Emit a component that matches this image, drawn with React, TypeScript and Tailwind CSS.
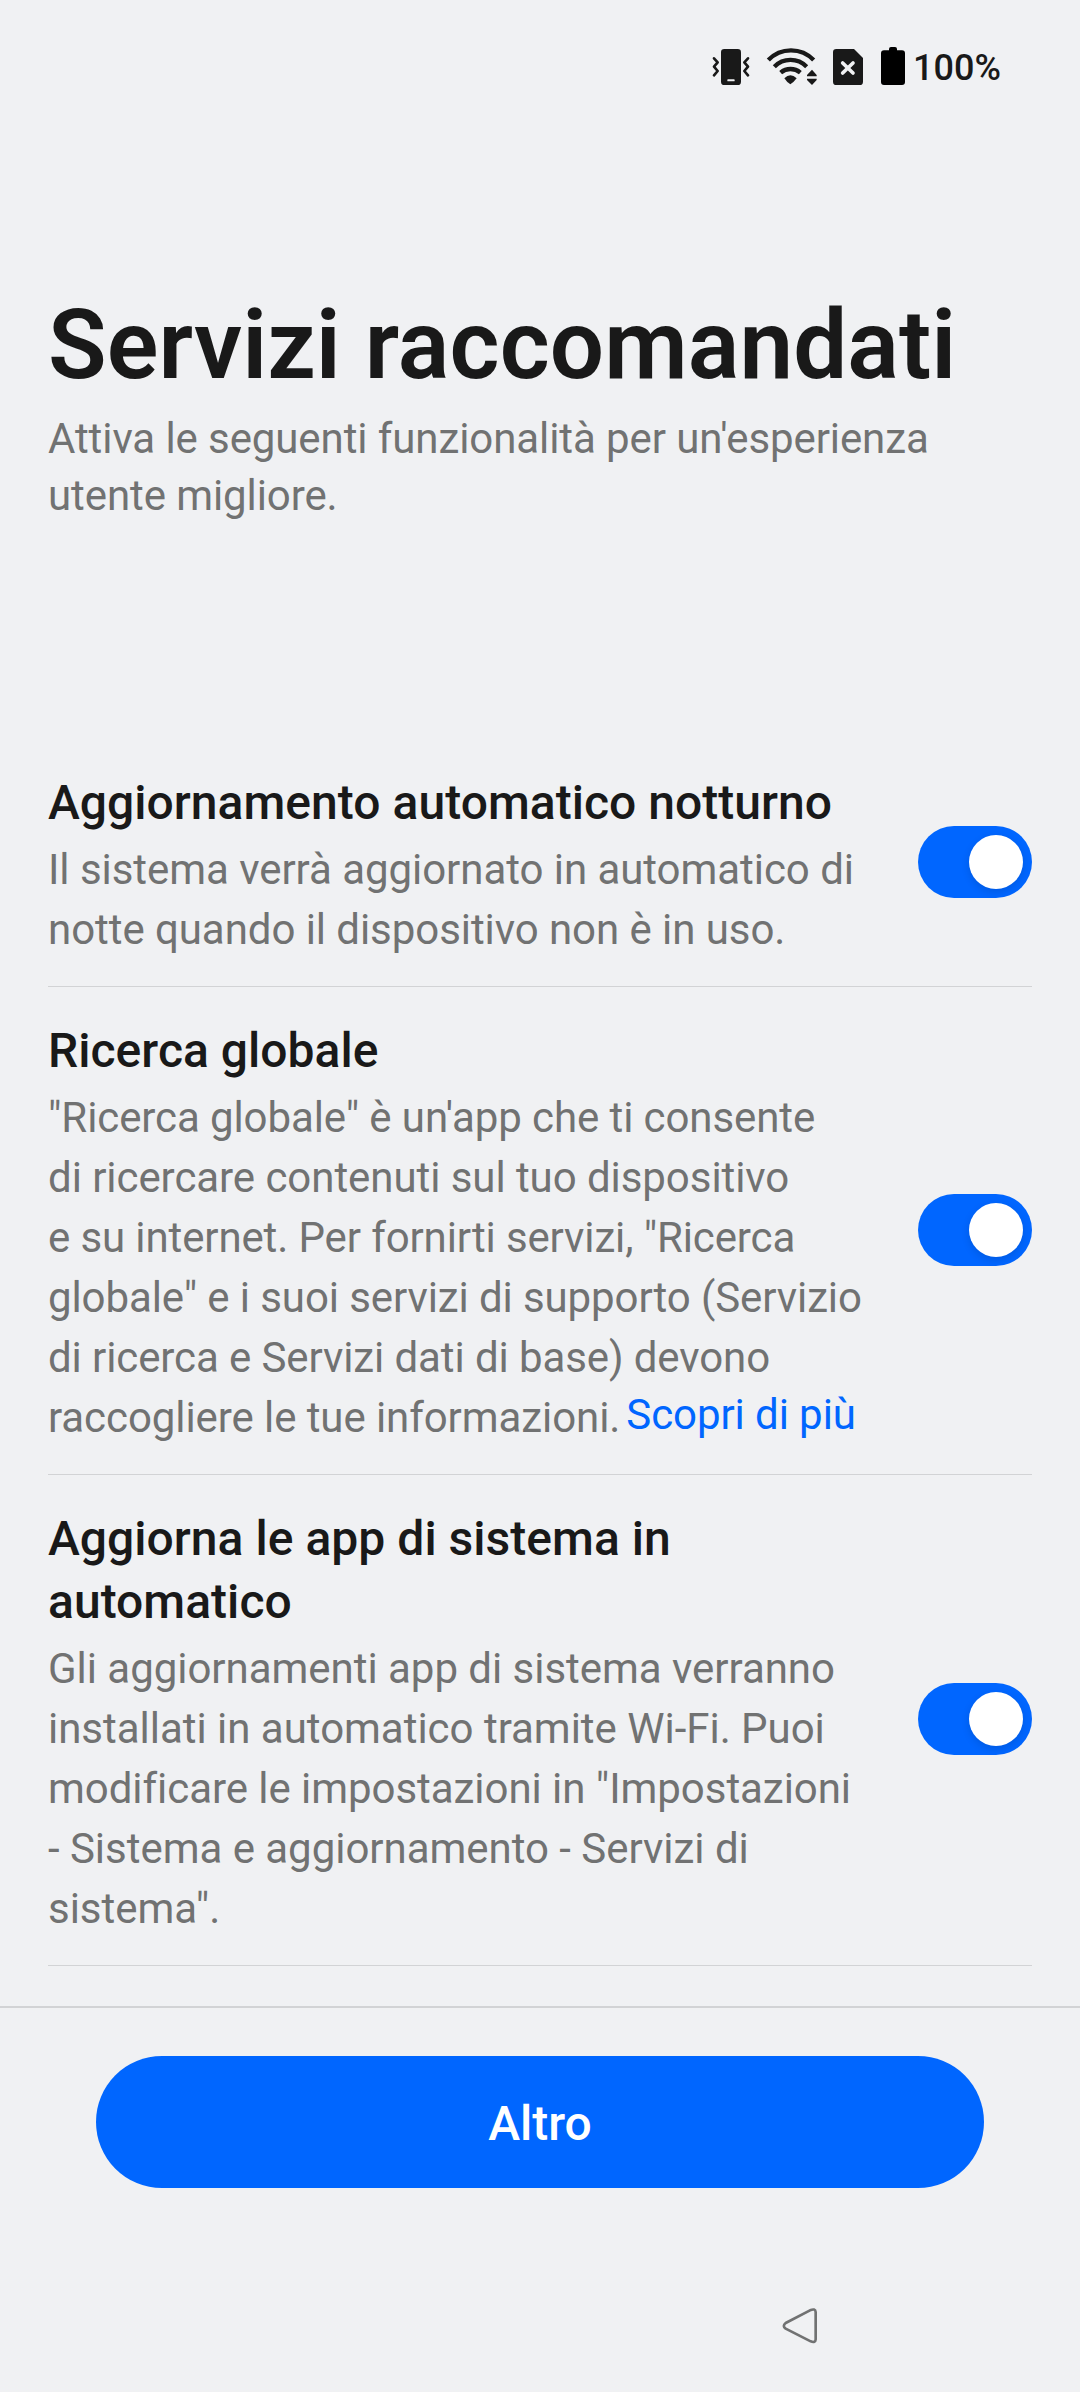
import React from "react";

type Line = { text: string; tracking: string };
type RowProps = { title: string[]; lines: Line[]; link?: string };

function VibrateIcon() {
  return (
    <svg width="38" height="39" viewBox="36 36 114 117" fill="none">
      <rect x="63" y="42" width="60" height="108" rx="10" fill="#191919" />
      <rect x="82" y="133" width="22" height="6" rx="2" fill="#f0f1f3" />
      <path d="M42 70L53 82L42 95L53 108L42 121M144 70L133 82L144 95L133 108L144 121" stroke="#191919" strokeWidth="8" strokeLinecap="round" strokeLinejoin="round" />
    </svg>
  );
}

function WifiIcon() {
  return (
    <svg width="51" height="39" viewBox="199 36 153 117" fill="none">
      <path d="M206 75A94 94 0 0 1 342 75M224 95A68 68 0 0 1 321 95M243 113A45 45 0 0 1 302 113" stroke="#191919" strokeWidth="13" />
      <path d="M254 130Q272 111 291 130Q283 141 272 148Q261 141 254 130Z" fill="#191919" />
      <path d="M337 104L351 120V124H322V120ZM322 131H351V135L337 150L322 135Z" fill="#191919" />
    </svg>
  );
}

function NoSimIcon() {
  return (
    <svg width="30" height="39" viewBox="399 36 90 117" fill="none">
      <path d="M409 42H462L489 69V140Q489 150 479 150H409Q399 150 399 140V52Q399 42 409 42Z" fill="#191919" />
      <path d="M428 84L459 114M459 84L428 114" stroke="#f0f1f3" strokeWidth="11" strokeLinecap="round" />
    </svg>
  );
}

function BatteryIcon() {
  return (
    <svg width="24" height="39" viewBox="543 36 72 117" fill="#000">
      <path d="M552 46H567V42Q567 36 573 36H585Q591 36 591 42V46H606Q615 46 615 55V141Q615 150 606 150H552Q543 150 543 141V55Q543 46 552 46Z" />
    </svg>
  );
}

function Toggle() {
  return (
    <div className="mb-[2px] flex h-[72px] w-[114px] shrink-0 items-center justify-end rounded-full bg-[#0066ff] pr-[9px]">
      <div className="size-[54px] rounded-full bg-white shadow-[0_3px_8px_rgba(0,0,0,0.12)]" />
    </div>
  );
}

function Row({ title, lines, link }: RowProps) {
  return (
    <section className="flex items-center justify-between border-b border-[#d2d3d5]">
      <div className="pt-8 pb-[26px] whitespace-nowrap">
        <h2 className="text-[48px] leading-[63px] font-medium tracking-[0.03px] text-[#191919]">
          {title.map((t) => (
            <div key={t}>{t}</div>
          ))}
        </h2>
        <div className="mt-[6px] text-[42px] leading-[60px] text-[#717272]">
          {lines.map(({ text, tracking }, i) => (
            <div key={text} className={tracking}>
              {text}
              {link && i === lines.length - 1 && (
                <a className="relative -top-[3px] ml-[6px] text-[#0066ff]">{link}</a>
              )}
            </div>
          ))}
        </div>
      </div>
      <Toggle />
    </section>
  );
}

const services: RowProps[] = [
  {
    title: ["Aggiornamento automatico notturno"],
    lines: [
      { text: "Il sistema verrà aggiornato in automatico di", tracking: "tracking-[-0.05px]" },
      { text: "notte quando il dispositivo non è in uso.", tracking: "tracking-[-0.06px]" },
    ],
  },
  {
    title: ["Ricerca globale"],
    link: "Scopri di più",
    lines: [
      { text: "\"Ricerca globale\" è un'app che ti consente", tracking: "tracking-[-0.1px]" },
      { text: "di ricercare contenuti sul tuo dispositivo", tracking: "tracking-[-0.06px]" },
      { text: "e su internet. Per fornirti servizi, \"Ricerca", tracking: "tracking-[-0.12px]" },
      { text: "globale\" e i suoi servizi di supporto (Servizio", tracking: "tracking-[-0.1px]" },
      { text: "di ricerca e Servizi dati di base) devono", tracking: "tracking-[-0.1px]" },
      { text: "raccogliere le tue informazioni.", tracking: "tracking-[-0.08px]" },
    ],
  },
  {
    title: ["Aggiorna le app di sistema in", "automatico"],
    lines: [
      { text: "Gli aggiornamenti app di sistema verranno", tracking: "tracking-[-0.03px]" },
      { text: "installati in automatico tramite Wi-Fi. Puoi", tracking: "tracking-[-0.02px]" },
      { text: "modificare le impostazioni in \"Impostazioni", tracking: "tracking-[-0.05px]" },
      { text: "- Sistema e aggiornamento - Servizi di", tracking: "tracking-[-0.03px]" },
      { text: "sistema\".", tracking: "tracking-[-0.02px]" },
    ],
  },
];

export default function App() {
  return (
    <div className="flex h-[2392px] w-[1080px] flex-col overflow-hidden bg-[#f0f1f3] font-['Roboto',sans-serif]">
      <header className="flex h-[133px] shrink-0 items-center justify-end pr-[79px]">
        <div className="flex items-center gap-4">
          <VibrateIcon />
          <WifiIcon />
          <NoSimIcon />
        </div>
        <div className="ml-[18px] flex items-center gap-2">
          <BatteryIcon />
          <span className="pt-[2px] text-[36px] leading-[42px] font-medium text-[#191919]">100%</span>
        </div>
      </header>
      <div className="h-[606px] shrink-0 px-12 pt-[156px] whitespace-nowrap">
        <h1 className="text-[96px] leading-[113px] font-[650] tracking-[0.1px] text-[#191919]">Servizi raccomandati</h1>
        <p className="mt-2 text-[42px] leading-[57px] tracking-[-0.09px] text-[#717272]">
          Attiva le seguenti funzionalità per un'esperienza
          <br />
          utente migliore.
        </p>
      </div>
      <main className="h-[1267px] shrink-0 px-12">
        {services.map((s) => (
          <Row key={s.title[0]} {...s} />
        ))}
      </main>
      <footer className="border-t-2 border-[#d2d3d5] px-24 pt-12">
        <button className="h-[132px] w-full rounded-full bg-[#0066ff] pt-[3px] text-[48px] font-medium text-white">Altro</button>
        <nav className="mt-[118px] flex justify-end pr-[164px]">
          <svg width="40" height="38" viewBox="60 78 120 114" fill="none">
            <path d="M77 129L150 91Q166 84 167 96V178Q166 190 152 184L77 146Q66 138 77 129Z" stroke="#717272" strokeWidth="8" strokeLinejoin="round" />
          </svg>
        </nav>
      </footer>
    </div>
  );
}
